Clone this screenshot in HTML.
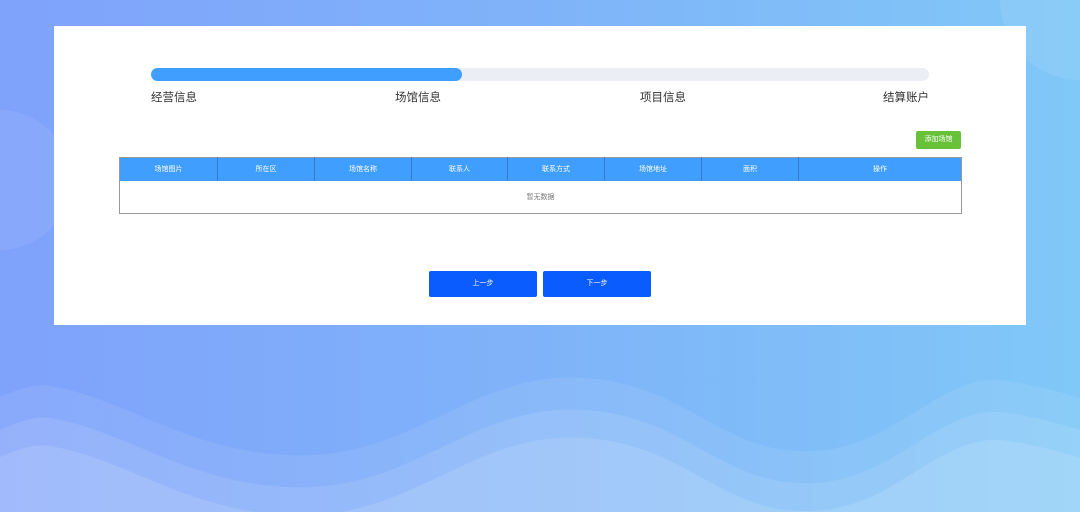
<!DOCTYPE html><html><head><meta charset="utf-8"><style>
*{margin:0;padding:0;box-sizing:border-box}
body{width:1080px;height:512px;overflow:hidden;position:relative;font-family:"Liberation Sans","Noto Sans CJK SC",sans-serif;background:linear-gradient(90deg,#7fa2fb,#7fb3f9 50%,#80c8f8)}
svg.bg{position:absolute;left:0;top:0}
.card{position:absolute;left:54px;top:26px;width:972px;height:299px;background:#fff}
.track{position:absolute;left:97px;top:42px;width:778px;height:13px;border-radius:7px;background:#ebeef5}
.fill{position:absolute;left:0;top:0;width:311px;height:13px;border-radius:7px;background:#409eff}
.lbl{position:absolute;top:63px;font-size:11.5px;color:#303133}
.add{position:absolute;left:862px;top:105px;width:45px;height:18px;background:#67c23a;color:#fff;font-size:7px;text-align:center;line-height:18px;border-radius:2px}
table{position:absolute;left:65px;top:131px;width:842px;border-collapse:collapse;border:1px solid #999;table-layout:fixed}
th{background:#409eff;color:#fff;font-size:7px;font-weight:normal;height:23px;border-right:1px solid #3a78c8}
td{height:33px;text-align:center;font-size:7px;color:#777}
.btn{position:absolute;top:245px;width:108px;height:26px;background:#0a5cff;color:#fff;font-size:7px;text-align:center;line-height:26px;border-radius:2px}
</style></head><body>
<svg class="bg" width="1080" height="512">
<circle cx="1080" cy="0" r="80" fill="#fff" fill-opacity=".08"/>
<circle cx="0" cy="180" r="70" fill="#fff" fill-opacity=".07"/>
<path d="M0 397 C20 388 40 382 55 387 C130 400 200 460 313 455 C420 450 480 370 585 378 C690 385 720 455 813 451 C900 447 940 370 1009 381 C1040 386 1060 392 1080 398 V512 H0Z" fill="#fff" fill-opacity=".08"/>
<path d="M0 430 C20 421 40 414 55 419 C130 432 200 492 313 487 C420 482 480 402 585 410 C690 417 720 487 813 483 C900 479 940 402 1009 413 C1040 418 1060 424 1080 430 V512 H0Z" fill="#fff" fill-opacity=".1"/>
<path d="M0 457 C20 448 40 442 55 447 C130 460 200 520 313 515 C420 510 480 430 585 438 C690 445 720 515 813 511 C900 507 940 430 1009 441 C1040 446 1060 452 1080 458 V512 H0Z" fill="#fff" fill-opacity=".12"/>
</svg>
<div class="card">
<div class="track"><div class="fill"></div></div>
<div class="lbl" style="left:97px">经营信息</div>
<div class="lbl" style="left:341px">场馆信息</div>
<div class="lbl" style="left:586px">项目信息</div>
<div class="lbl" style="left:829px">结算账户</div>
<div class="add">添加场馆</div>
<table><colgroup><col style="width:98px"><col style="width:97px"><col style="width:97px"><col style="width:96px"><col style="width:97px"><col style="width:97px"><col style="width:97px"><col style="width:163px"></colgroup>
<tr><th>场馆图片</th><th>所在区</th><th>场馆名称</th><th>联系人</th><th>联系方式</th><th>场馆地址</th><th>面积</th><th style="border-right:0">操作</th></tr>
<tr><td colspan="8">暂无数据</td></tr></table>
<div class="btn" style="left:375px">上一步</div>
<div class="btn" style="left:489px">下一步</div>
</div>
</body></html>
